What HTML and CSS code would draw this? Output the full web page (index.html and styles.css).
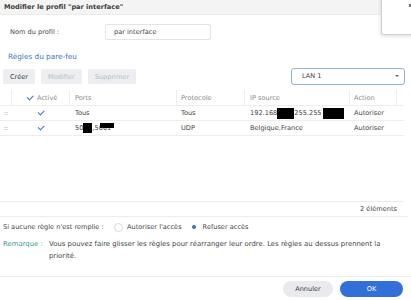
FILE: index.html
```html
<!DOCTYPE html>
<html lang="fr">
<head>
<meta charset="UTF-8" />
<title>Modifier le profil</title>
<link rel="stylesheet" href="styles.css">
</head>
<body>
  <div class="dialog">
    <div class="titlebar">Modifier le profil "par interface"</div>

    <div class="form-row">
      <label class="label">Nom du profil :</label>
      <div class="input">par interface</div>
    </div>

    <div class="section-title">Règles du pare-feu</div>

    <div class="toolbar">
      <button class="btn">Créer</button>
      <button class="btn disabled">Modifier</button>
      <button class="btn disabled">Supprimer</button>
      <div class="select">LAN 1<span class="arrow"></span></div>
    </div>

    <div class="grid">
      <div class="row head">
        <div class="cell c-handle"></div>
        <div class="cell c-check"><span class="tick"></span>Activé</div>
        <div class="cell c-ports">Ports</div>
        <div class="cell c-proto">Protocole</div>
        <div class="cell c-ip">IP source</div>
        <div class="cell c-action">Action</div>
      </div>
      <div class="row">
        <div class="cell c-handle"><span class="handle"></span></div>
        <div class="cell c-check center"><span class="tick"></span></div>
        <div class="cell c-ports">Tous</div>
        <div class="cell c-proto">Tous</div>
        <div class="cell c-ip">192.168<span class="mask m-ip1"></span>255.255<span class="mask m-ip2"></span></div>
        <div class="cell c-action">Autoriser</div>
      </div>
      <div class="row">
        <div class="cell c-handle"><span class="handle"></span></div>
        <div class="cell c-check center"><span class="tick"></span></div>
        <div class="cell c-ports">50<span class="mask m-p1"></span>,5001<span class="mask m-p2"></span></div>
        <div class="cell c-proto">UDP</div>
        <div class="cell c-ip">Belgique,France</div>
        <div class="cell c-action">Autoriser</div>
      </div>
      <div class="grid-empty"></div>
    </div>

    <div class="pager">2 éléments</div>

    <div class="policy">
      <span class="policy-label">Si aucune règle n'est remplie :</span>
      <span class="radio"></span><span>Autoriser l'accès</span>
      <span class="radio on"></span><span>Refuser accès</span>
    </div>

    <div class="note">
      <span class="note-key">Remarque :</span>
      <span class="note-text">Vous pouvez faire glisser les règles pour réarranger leur ordre. Les règles au dessus prennent la priorité.</span>
    </div>

    <div class="footer">
      <button class="pill cancel">Annuler</button>
      <button class="pill ok">OK</button>
    </div>
  </div>

  <div class="popup"><span class="popup-mark"></span></div>
</body>
</html>
```

FILE: styles.css
```css
* {
  box-sizing: border-box;
}
body {
  margin: 0;
  width: 411px;
  height: 300px;
  overflow: hidden;
  background: #ffffff;
  color: #444444;
  font-family: 'DejaVu Sans', Verdana, sans-serif;
  font-size: 6.6px;
  position: relative;
}
.dialog {
  display: flex;
  flex-direction: column;
  height: 300px;
}
.titlebar {
  height: 15px;
  line-height: 14px;
  padding-left: 4px;
  font-weight: bold;
  font-size: 6.6px;
  color: #404040;
  background: #f4f4f4;
  border-bottom: 1px solid #ebebeb;
}
.form-row {
  display: flex;
  align-items: center;
  margin-top: 9px;
  padding-left: 10px;
}
.label {
  width: 95px;
}
.input {
  width: 106px;
  height: 16px;
  line-height: 14px;
  padding-left: 8px;
  border: 1px solid #e2e4e8;
  border-radius: 2px;
}
.section-title {
  margin-top: 12px;
  padding-left: 8px;
  font-size: 7.3px;
  color: #3b78c2;
}
.toolbar {
  display: flex;
  align-items: center;
  margin-top: 7px;
  padding-left: 3px;
  gap: 6px;
}
.btn {
  height: 15px;
  padding: 0 7px;
  border: none;
  border-radius: 2px;
  background: #eceef1;
  color: #3a3a3a;
  font-family: inherit;
  font-size: 6.6px;
}
.btn.disabled {
  color: #b8bcc2;
}
.select {
  margin-left: auto;
  margin-right: 6px;
  width: 114px;
  height: 17px;
  line-height: 15px;
  padding-left: 10px;
  border: 1px solid #8fb0dc;
  border-radius: 3px;
  position: relative;
}
.arrow {
  position: absolute;
  right: 5px;
  top: 6px;
  border-left: 2px solid transparent;
  border-right: 2px solid transparent;
  border-top: 2px solid #666;
}
.grid {
  margin-top: 5px;
  width: 404px;
  border-bottom: 1px solid #ececec;
}
.row {
  display: flex;
  height: 15px;
  align-items: center;
  border-bottom: 1px solid #eeeeee;
}
.row.head {
  height: 16px;
  color: #8a8a8a;
}
.cell {
  height: 100%;
  display: flex;
  align-items: center;
  padding-left: 5px;
  white-space: nowrap;
}
.head .cell {
  border-right: 1px solid #eeeeee;
}
.c-handle { width: 12px; padding: 0; justify-content: center; }
.c-check { width: 58px; padding-left: 15px; }
.c-check.center { justify-content: center; padding-left: 0; }
.c-ports { width: 107px; }
.c-proto { width: 68px; padding-left: 4px; }
.c-ip { width: 105px; }
.c-action { width: 47px; padding-left: 4px; }
.grid-empty {
  height: 65px;
}
.tick {
  display: inline-block;
  width: 6px;
  height: 3.5px;
  border-left: 1.3px solid #3a72c9;
  border-bottom: 1.3px solid #3a72c9;
  transform: rotate(-45deg);
  margin: -2px 4px 0 0;
}
.center .tick {
  margin: -2px 0 0 0;
}
.handle {
  width: 4px;
  height: 3px;
  border-top: 1px solid #dcdcdc;
  border-bottom: 1px solid #dcdcdc;
}
.mask {
  display: inline-block;
  background: #000;
}
.m-ip1 { width: 17px; height: 11px; }
.m-ip2 { width: 21px; height: 11px; margin-left: 1px; }
.m-p1 { width: 9px; height: 10px; }
.m-p2 { width: 14px; height: 5px; margin-left: -11px; align-self: flex-start; margin-top: 2px; }
.pager {
  height: 15px;
  line-height: 15px;
  text-align: right;
  padding-right: 11px;
  border-bottom: 1px solid #ececec;
  width: 408px;
}
.policy {
  display: flex;
  align-items: center;
  margin-top: 5px;
  padding-left: 3px;
  height: 10px;
}
.policy-label {
  width: 111px;
  white-space: nowrap;
}
.radio {
  width: 9px;
  height: 9px;
  border: 1px solid #d6d9de;
  border-radius: 50%;
  margin: 0 4px 0 0;
  position: relative;
}
.radio.on {
  border-color: #ffffff;
  margin-left: 8px;
}
.radio.on::after {
  content: "";
  position: absolute;
  left: 1.5px;
  top: 1.5px;
  width: 4px;
  height: 4px;
  border-radius: 50%;
  background: #3a6fd6;
}
.note {
  display: flex;
  margin-top: 6px;
  padding-left: 3px;
  line-height: 12px;
  font-size: 6.9px;
}
.note-key {
  color: #3a9c8e;
  width: 46px;
  flex: none;
}
.note-text {
  width: 345px;
}
.footer {
  margin-top: auto;
  border-top: 1px solid #ececec;
  height: 24px;
  display: flex;
  justify-content: flex-end;
  align-items: flex-start;
  padding-top: 4px;
  padding-right: 8px;
  gap: 7px;
}
.pill {
  height: 16px;
  border: none;
  border-radius: 8px;
  font-family: inherit;
  font-size: 6.6px;
}
.pill.cancel {
  width: 50px;
  background: #e8eaee;
  color: #3a3a3a;
}
.pill.ok {
  width: 63px;
  background: #336fd9;
  color: #ffffff;
}
.popup {
  position: absolute;
  left: 381px;
  top: -2px;
  width: 40px;
  height: 37px;
  background: #fff;
  border: 1px solid #cfcfcf;
  border-radius: 2px;
  box-shadow: 0 1px 4px rgba(0, 0, 0, 0.15);
}
.popup-mark {
  position: absolute;
  left: 27px;
  top: 5px;
  width: 2px;
  height: 3px;
  background: #777;
}
```
